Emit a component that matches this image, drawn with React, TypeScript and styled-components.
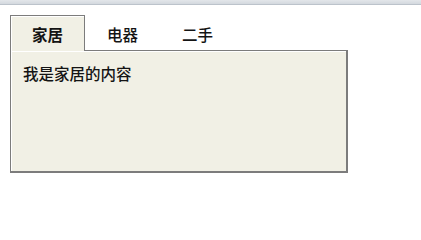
import * as React from "react";
import styled, { createGlobalStyle } from "styled-components";

const GlobalStyle = createGlobalStyle`
    html, body {
        margin: 0;
        padding: 0;
        background: #ffffff;
    }
    body {
        font-family: "Noto Sans CJK SC", "Noto Sans", sans-serif;
        color: #141414;
    }
`;

const TopStrip = styled.div`
    height: 4px;
    background: linear-gradient(#e3e6ea, #d3d8de);
    border-bottom: 1px solid #bcc3cb;
`;

const Page = styled.div`
    padding: 10px 0 0 10px;
`;

const TabList = styled.ul`
    display: flex;
    margin: 0;
    padding: 0;
    list-style: none;
    position: relative;
    z-index: 1;
`;

const Tab = styled.li<{ $active: boolean }>`
    width: 73px;
    height: 35px;
    margin-bottom: -1px;
    display: flex;
    align-items: center;
    justify-content: center;
    font-size: 15.5px;
    font-weight: ${p => (p.$active ? 700 : 500)};
    cursor: pointer;
    border: 1px solid ${p => (p.$active ? "#7c7c7c" : "transparent")};
    border-bottom: none;
    background: ${p => (p.$active ? "#f1f0e5" : "transparent")};
    box-shadow: ${p => (p.$active ? "inset 1px 1px 0 #ffffff" : "none")};
`;

const Panel = styled.div`
    box-sizing: border-box;
    width: 338px;
    height: 123px;
    padding: 12px 12px 0 12px;
    background: #f1f0e5;
    border: 1px solid #7c7c7c;
    border-right-width: 2px;
    border-bottom-width: 2px;
    box-shadow: inset 1px 1px 0 #ffffff;
    font-size: 15.5px;
    font-weight: 500;
    line-height: 20px;
`;

const tabs = [
    { key: "home", label: "家居", content: "我是家居的内容" },
    { key: "elec", label: "电器", content: "我是电器的内容" },
    { key: "used", label: "二手", content: "我是二手的内容" },
];

export default function App() {
    const [active, setActive] = React.useState(0);

    return <>
        <GlobalStyle />
        <TopStrip />
        <Page>
            <TabList>
                {tabs.map((t, i) => (
                    <Tab key={t.key} $active={i === active} onClick={() => setActive(i)}>
                        {t.label}
                    </Tab>
                ))}
            </TabList>
            <Panel>{tabs[active].content}</Panel>
        </Page>
    </>;
}
